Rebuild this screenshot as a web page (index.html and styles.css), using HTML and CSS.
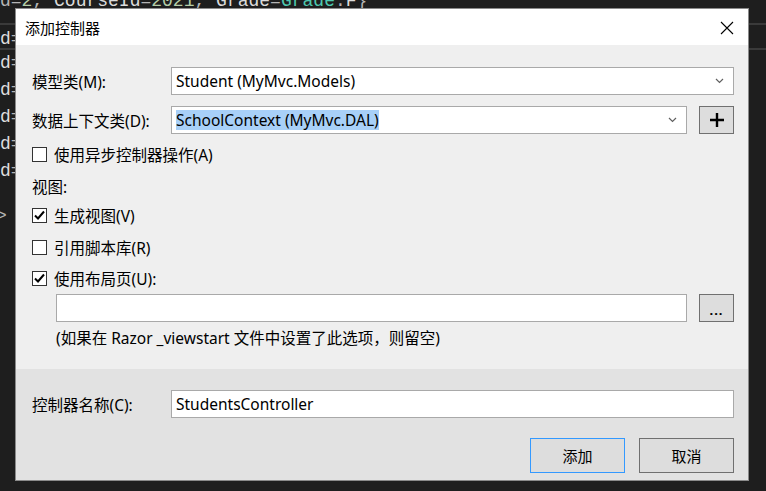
FILE: index.html
```
<!DOCTYPE html>
<html lang="zh-CN">

<head>
    <meta charset="UTF-8">
    <title>添加控制器</title>
    <link rel="stylesheet" href="styles.css">
</head>

<body>
    <div class="editor">
        <div class="code-line first"><span class="op">d=</span><span class="num">2</span><span class="op">, </span><span class="ident">CourseId</span><span class="op">=</span><span class="num">2021</span><span class="op">, </span><span class="ident">Grade</span><span class="op">=</span><span class="type">Grade</span><span class="op">.</span><span class="ident">F</span><span class="op">}</span></div>
        <div class="code-line current"><span class="ident">d</span><span class="op">=</span></div>
        <div class="code-line"><span class="ident">d</span><span class="op">=</span></div>
        <div class="code-line"><span class="ident">d</span><span class="op">=</span></div>
        <div class="code-line"><span class="ident">d</span><span class="op">=</span></div>
        <div class="code-line"><span class="ident">d</span><span class="op">=</span></div>
        <div class="code-line"><span class="ident">d</span><span class="op">=</span></div>
        <div class="code-line fold"><span class="op">&gt;</span></div>
    </div>

    <div class="dialog">
        <div class="title-bar">
            <span class="title">添加控制器</span>
            <svg class="close" width="14" height="14" viewBox="0 0 14 14">
                <path d="M1 1 L13 13 M13 1 L1 13" stroke="#000" stroke-width="1.1" fill="none" />
            </svg>
        </div>

        <div class="dialog-body">
            <div class="field">
                <label class="field-label">模型类(M):</label>
                <div class="select">
                    <span class="value">Student (MyMvc.Models)</span>
                    <svg class="chevron" width="9" height="6" viewBox="0 0 9 6"><path d="M1 1 L4.5 4.5 L8 1" stroke="#606060" stroke-width="1.2" fill="none" /></svg>
                </div>
            </div>
            <div class="field gap-11">
                <label class="field-label">数据上下文类(D):</label>
                <div class="select">
                    <span class="value selected">SchoolContext (MyMvc.DAL)</span>
                    <svg class="chevron" width="9" height="6" viewBox="0 0 9 6"><path d="M1 1 L4.5 4.5 L8 1" stroke="#606060" stroke-width="1.2" fill="none" /></svg>
                </div>
                <button class="icon-btn plus">
                    <svg width="14" height="14" viewBox="0 0 14 14"><path d="M7 0 V14 M0 7 H14" stroke="#000" stroke-width="2.4" fill="none" /></svg>
                </button>
            </div>

            <div class="check-row gap-10">
                <span class="box"></span>
                <span>使用异步控制器操作(A)</span>
            </div>
            <div class="text-row gap-12">视图:</div>
            <div class="check-row gap-9">
                <span class="box">
                    <svg width="13" height="13" viewBox="0 0 13 13"><path d="M2 6.5 L5 9.5 L11 2.5" stroke="#000" stroke-width="2" fill="none" /></svg>
                </span>
                <span>生成视图(V)</span>
            </div>
            <div class="check-row gap-12">
                <span class="box"></span>
                <span>引用脚本库(R)</span>
            </div>
            <div class="check-row gap-11">
                <span class="box">
                    <svg width="13" height="13" viewBox="0 0 13 13"><path d="M2 6.5 L5 9.5 L11 2.5" stroke="#000" stroke-width="2" fill="none" /></svg>
                </span>
                <span>使用布局页(U):</span>
            </div>
            <div class="field indent gap-6">
                <div class="textbox"></div>
                <button class="icon-btn dots">...</button>
            </div>
            <div class="text-row indent gap-5">(如果在 Razor _viewstart 文件中设置了此选项，则留空)</div>
        </div>

        <div class="dialog-footer">
            <div class="field">
                <label class="field-label">控制器名称(C):</label>
                <div class="textbox">StudentsController</div>
            </div>
            <div class="actions">
                <button class="btn default">添加</button>
                <button class="btn">取消</button>
            </div>
        </div>
    </div>
</body>

</html>
```

FILE: styles.css
```
html,
body {
    margin: 0;
    padding: 0;
    height: 100%;
    overflow: hidden;
    background: #1e1e1e;
}

body {
    position: relative;
    font-family: "Noto Sans", "Noto Sans CJK SC", sans-serif;
    font-size: 15.5px;
    color: #000;
}

/* 背后的代码编辑器 */
.editor {
    font-family: "Liberation Mono", monospace;
    font-size: 18px;
    color: #dcdcdc;
    margin-top: -12px;
}

.code-line {
    height: 27px;
    line-height: 27px;
    white-space: pre;
    box-sizing: border-box;
}

.code-line.first {
    height: 23px;
}

.code-line.current {
    border-top: 2px solid #3a3a3a;
    border-bottom: 2px solid #3a3a3a;
    line-height: 29px;
    margin-top: 12px;
}

.code-line.fold {
    margin-top: 18px;
    color: #b4b4b4;
    margin-left: -4px;
}

.ident { color: #dcdcdc; }
.op { color: #b4b4b4; }
.num { color: #b5cea8; }
.type { color: #4ec9b0; }

/* 对话框 */
.dialog {
    position: absolute;
    left: 15px;
    top: 8px;
    width: 734px;
    height: 473px;
    box-sizing: border-box;
    border: 1px solid #8a8a8a;
    background: #efefef;
}

.title-bar {
    height: 36px;
    background: #fff;
    display: flex;
    align-items: center;
    justify-content: space-between;
    padding: 0 14px 0 9px;
    font-size: 15px;
}

.close {
    margin-top: 1px;
}

.dialog-body {
    height: 324px;
    box-sizing: border-box;
    padding: 22px 14px 0 16px;
}

.dialog-footer {
    height: 111px;
    box-sizing: border-box;
    background: #e2e2e2;
    padding: 21px 14px 0 16px;
}

.field {
    display: flex;
    align-items: center;
    height: 28px;
}

.field-label {
    width: 139px;
    flex: none;
}

.select,
.textbox {
    flex: 1;
    height: 28px;
    box-sizing: border-box;
    background: #fff;
    border: 1px solid #a9a9a9;
    display: flex;
    align-items: center;
    padding: 0 4px;
}

.value {
    margin-right: auto;
}

.selected {
    background: #a8d0f8;
    line-height: 20px;
}

.chevron {
    margin-right: 5px;
}

.icon-btn {
    flex: none;
    width: 35px;
    height: 28px;
    margin-left: 12px;
    box-sizing: border-box;
    border: 1px solid #707070;
    background: #dddddd;
    padding: 0;
    display: flex;
    align-items: center;
    justify-content: center;
    font-family: inherit;
}

.icon-btn.dots {
    font-size: 13px;
    font-weight: bold;
    letter-spacing: 1px;
    padding-top: 4px;
}

.check-row,
.text-row {
    display: flex;
    align-items: center;
    height: 20px;
}

.box {
    width: 15px;
    height: 15px;
    box-sizing: border-box;
    border: 1px solid #333;
    background: #fff;
    margin-right: 7px;
    display: flex;
    align-items: center;
    justify-content: center;
}

.indent {
    margin-left: 24px;
}

.gap-5 { margin-top: 5px; }
.gap-6 { margin-top: 6px; }
.gap-9 { margin-top: 9px; }
.gap-10 { margin-top: 10px; }
.gap-11 { margin-top: 11px; }
.gap-12 { margin-top: 12px; }

.actions {
    display: flex;
    justify-content: flex-end;
    gap: 14px;
    margin-top: 20px;
}

.btn {
    width: 95px;
    height: 35px;
    box-sizing: border-box;
    border: 1px solid #707070;
    background: #dddddd;
    font-family: inherit;
    font-size: 15px;
    color: #000;
}

.btn.default {
    border: 1px solid #3399ff;
}
```
